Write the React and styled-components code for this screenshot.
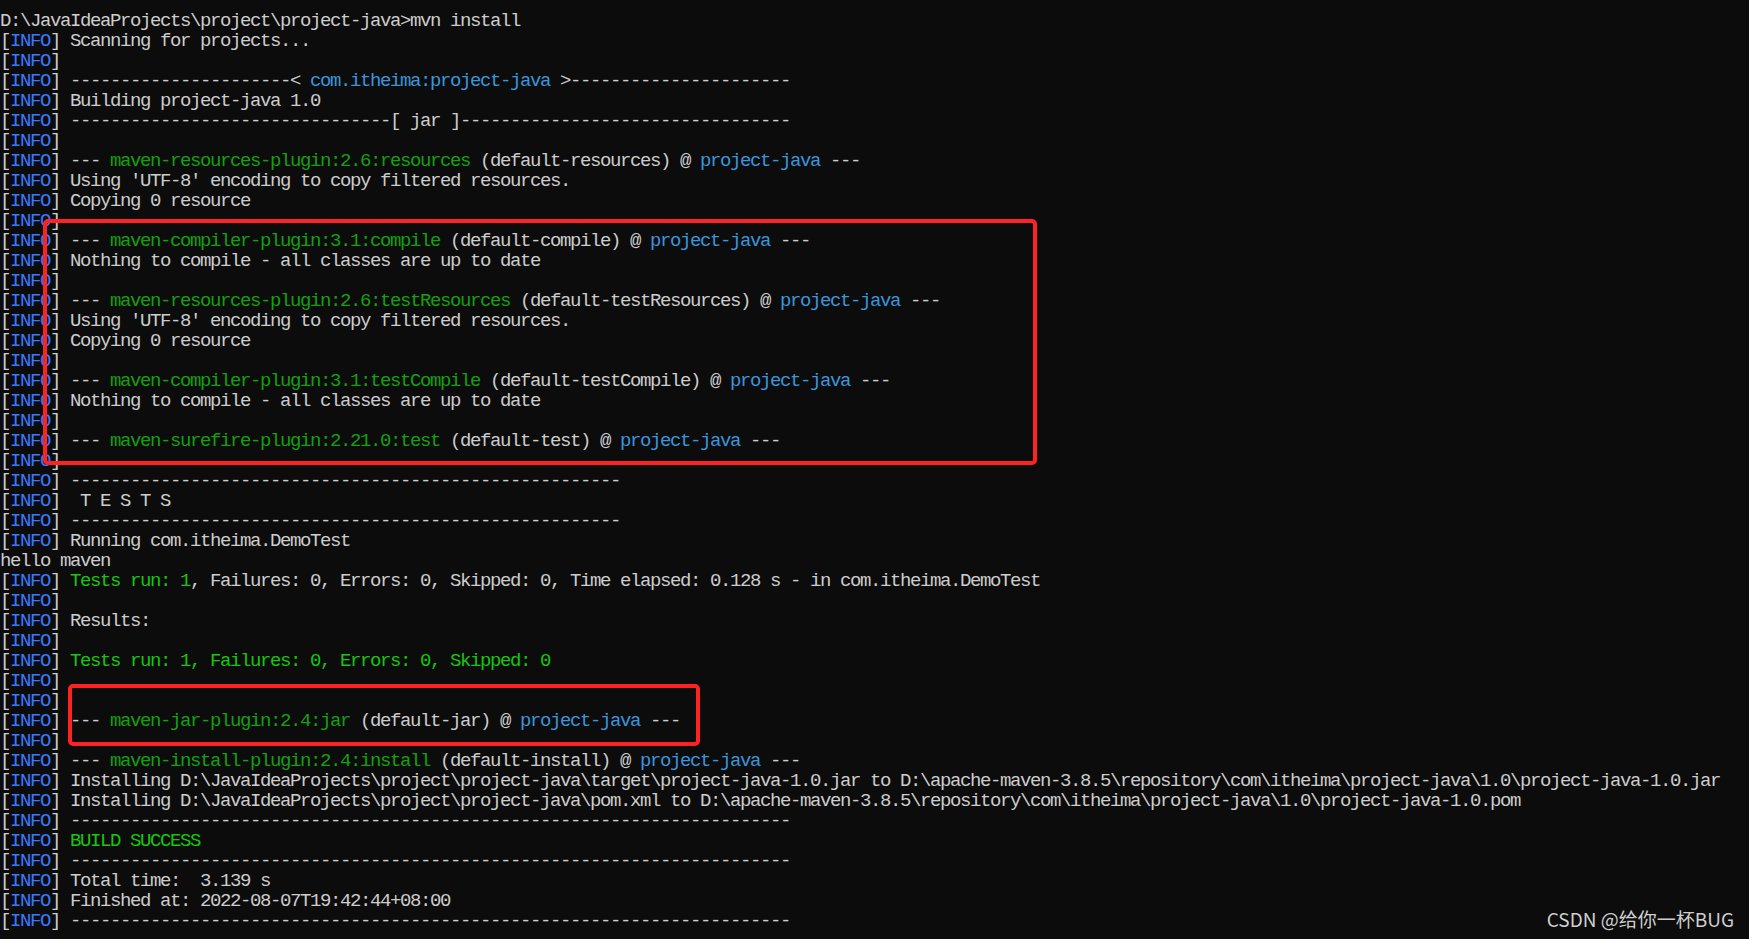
import React from 'react';
import styled, { createGlobalStyle } from 'styled-components';

const GlobalStyle = createGlobalStyle`
  html, body {
    margin: 0;
    padding: 0;
    background: #0c0c0c;
    overflow: hidden;
  }
`;

const Screen = styled.div`
  position: relative;
  box-sizing: border-box;
  width: 1749px;
  height: 939px;
  padding: 11px 0 0 0;
  background: #0c0c0c;
  overflow: hidden;
`;

const Log = styled.div`
  display: flex;
  flex-direction: column;
  font-family: "Liberation Mono", "DejaVu Sans Mono", monospace;
  font-size: 19px;
  letter-spacing: calc(10px - 0.6001em);
  color: #cccccc;
`;

const Line = styled.div`
  height: 20px;
  line-height: 20px;
  white-space: pre;
`;

const Bracket = styled.span`
  color: #cccccc;
`;

const Level = styled.span`
  color: #3b78ff;
`;

const Seg = styled.span`
  color: ${(p) =>
    p.$kind === 'p' ? '#13a10e' :
    p.$kind === 'a' ? '#3a96dd' :
    p.$kind === 'g' ? '#16c60c' : '#cccccc'};
`;

const Highlight = styled.div`
  position: absolute;
  box-sizing: border-box;
  left: ${(p) => p.$x}px;
  top: ${(p) => p.$y}px;
  width: ${(p) => p.$w}px;
  height: ${(p) => p.$h}px;
  border: 4px solid #ff2222;
  border-radius: 5px;
  pointer-events: none;
`;

const Watermark = styled.div`
  position: absolute;
  right: 15px;
  bottom: 7px;
  font-family: "Noto Sans CJK SC", "Noto Sans", sans-serif;
  font-size: 19px;
  color: #cfcfcf;
  letter-spacing: 0;
  white-space: nowrap;
`;

const D = (n) => '-'.repeat(n);
const plugin = (name, exec) => [
  ['t', '--- '],
  ['p', name],
  ['t', ` (${exec}) @ `],
  ['a', 'project-java'],
  ['t', ' ---'],
];
const t = (s) => [['t', s]];
const empty = [];

const lines = [
  { raw: true, segs: t('D:\\JavaIdeaProjects\\project\\project-java>mvn install') },
  { segs: t('Scanning for projects...') },
  { segs: empty },
  { segs: [['t', D(22) + '< '], ['a', 'com.itheima:project-java'], ['t', ' >' + D(22)]] },
  { segs: t('Building project-java 1.0') },
  { segs: t(D(32) + '[ jar ]' + D(33)) },
  { segs: empty },
  { segs: plugin('maven-resources-plugin:2.6:resources', 'default-resources') },
  { segs: t("Using 'UTF-8' encoding to copy filtered resources.") },
  { segs: t('Copying 0 resource') },
  { segs: empty },
  { segs: plugin('maven-compiler-plugin:3.1:compile', 'default-compile') },
  { segs: t('Nothing to compile - all classes are up to date') },
  { segs: empty },
  { segs: plugin('maven-resources-plugin:2.6:testResources', 'default-testResources') },
  { segs: t("Using 'UTF-8' encoding to copy filtered resources.") },
  { segs: t('Copying 0 resource') },
  { segs: empty },
  { segs: plugin('maven-compiler-plugin:3.1:testCompile', 'default-testCompile') },
  { segs: t('Nothing to compile - all classes are up to date') },
  { segs: empty },
  { segs: plugin('maven-surefire-plugin:2.21.0:test', 'default-test') },
  { segs: empty },
  { segs: t(D(55)) },
  { segs: t(' T E S T S') },
  { segs: t(D(55)) },
  { segs: t('Running com.itheima.DemoTest') },
  { raw: true, segs: t('hello maven') },
  {
    segs: [
      ['g', 'Tests run: 1'],
      ['t', ', Failures: 0, Errors: 0, Skipped: 0, Time elapsed: 0.128 s - in com.itheima.DemoTest'],
    ],
  },
  { segs: empty },
  { segs: t('Results:') },
  { segs: empty },
  { segs: [['g', 'Tests run: 1, Failures: 0, Errors: 0, Skipped: 0']] },
  { segs: empty },
  { segs: empty },
  { segs: plugin('maven-jar-plugin:2.4:jar', 'default-jar') },
  { segs: empty },
  { segs: plugin('maven-install-plugin:2.4:install', 'default-install') },
  {
    segs: t(
      'Installing D:\\JavaIdeaProjects\\project\\project-java\\target\\project-java-1.0.jar to D:\\apache-maven-3.8.5\\repository\\com\\itheima\\project-java\\1.0\\project-java-1.0.jar'
    ),
  },
  {
    segs: t(
      'Installing D:\\JavaIdeaProjects\\project\\project-java\\pom.xml to D:\\apache-maven-3.8.5\\repository\\com\\itheima\\project-java\\1.0\\project-java-1.0.pom'
    ),
  },
  { segs: t(D(72)) },
  { segs: [['g', 'BUILD SUCCESS']] },
  { segs: t(D(72)) },
  { segs: t('Total time:  3.139 s') },
  { segs: t('Finished at: 2022-08-07T19:42:44+08:00') },
  { segs: t(D(72)) },
];

const InfoTag = () => (
  <>
    <Bracket>[</Bracket>
    <Level>INFO</Level>
    <Bracket>]</Bracket>
  </>
);

const LogLine = ({ line }) => (
  <Line>
    {!line.raw && <InfoTag />}
    {!line.raw && line.segs.length > 0 && ' '}
    {line.segs.map(([kind, text], i) => (
      <Seg key={i} $kind={kind}>
        {text}
      </Seg>
    ))}
  </Line>
);

export default function App() {
  return (
    <>
      <GlobalStyle />
      <Screen>
        <Log>
          {lines.map((line, i) => (
            <LogLine key={i} line={line} />
          ))}
        </Log>
        <Highlight $x={43} $y={219} $w={994} $h={246} />
        <Highlight $x={68} $y={684} $w={632} $h={62} />
        <Watermark>CSDN @给你一杯BUG</Watermark>
      </Screen>
    </>
  );
}
